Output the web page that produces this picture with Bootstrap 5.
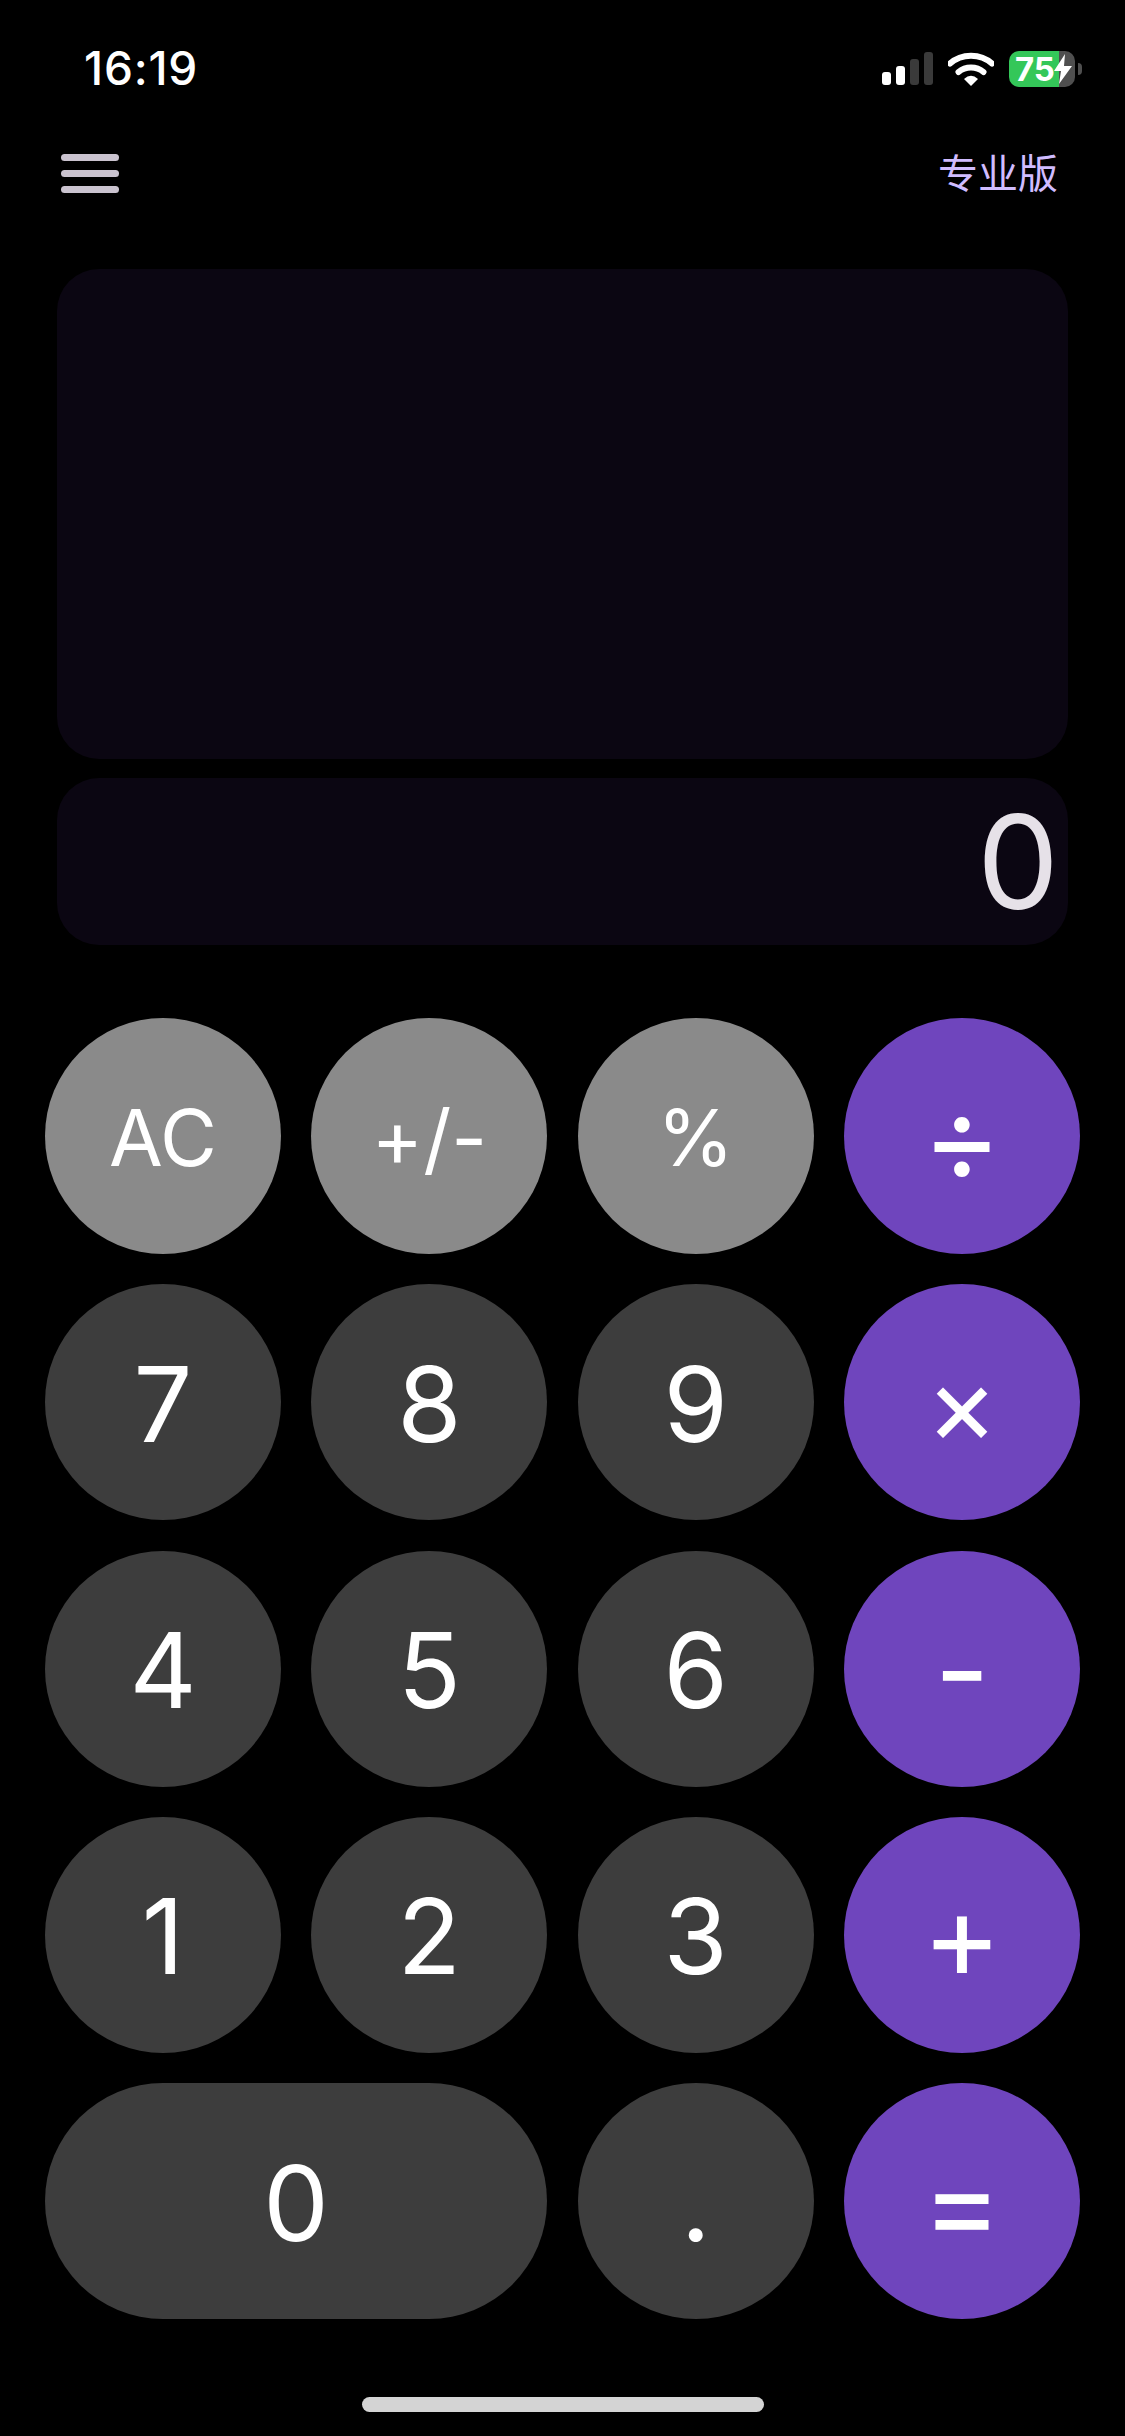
<!DOCTYPE html>
<html lang="zh-CN">

<head>
    <meta charset="UTF-8" />
    <meta name="viewport" content="width=device-width, initial-scale=1.0" />
    <title>计算器</title>
    <link href="https://cdn.jsdelivr.net/npm/bootstrap@5.3.0/dist/css/bootstrap.min.css" rel="stylesheet" />
    <style>
        body {
            background-color: #000;
            color: #fff;
            font-family: Inter, "Noto Sans CJK SC", sans-serif;
            width: 1125px;
            height: 2436px;
            overflow: hidden;
        }

        .status-bar {
            height: 96px;
            padding: 44px 43px 0 84px;
        }

        .clock {
            font-size: 46px;
            font-weight: 500;
            line-height: 48px;
            letter-spacing: 0.8px;
        }

        .status-icons {
            margin-top: 7px;
        }

        .status-icon {
            margin-right: 15px;
        }

        .battery {
            width: 66px;
            height: 36px;
            border-radius: 10px;
            background: linear-gradient(to right, #34c759 50px, #4f4f4f 50px);
            font-size: 33px;
            font-weight: 700;
            line-height: 36px;
            padding-left: 6px;
        }

        .battery svg {
            margin-left: -2px;
        }

        .battery-nub {
            width: 4px;
            height: 12px;
            margin-left: 3px;
            border-radius: 0 4px 4px 0;
            background-color: #4f4f4f;
        }

        .top-bar {
            height: 77px;
            margin-top: 39px;
            padding: 0 67px 0 61px;
        }

        .menu-btn {
            width: 58px;
            gap: 9.5px;
        }

        .menu-btn span {
            height: 6.5px;
            border-radius: 4px;
            background-color: #cac3cf;
        }

        .pro-btn {
            color: #d0bcff;
            font-size: 40px;
            font-weight: 400;
            line-height: 48px;
        }

        .panel {
            margin: 0 57px;
            background-color: #0b0612;
            border-radius: 42px;
        }

        .panel-history {
            height: 490px;
            margin-top: 57px;
        }

        .panel-result {
            height: 167px;
            margin-top: 19px;
            padding-right: 9px;
            color: #e6e1e8;
            font-size: 130px;
            font-weight: 400;
            line-height: 167px;
        }

        .keypad {
            display: grid;
            grid-template-columns: repeat(4, 236px);
            grid-auto-rows: 236px;
            gap: 30.25px 30.33px;
            margin: 73px 45px 0;
        }

        .key {
            --bs-btn-border-width: 0;
            --bs-btn-padding-x: 0;
            --bs-btn-padding-y: 0;
            --bs-btn-color: #fff;
            --bs-btn-hover-color: #fff;
            padding-top: 3px;
            font-size: 104px;
            font-weight: 400;
            line-height: 1;
        }

        .key-fn {
            --bs-btn-bg: #8a8a8a;
            --bs-btn-hover-bg: #8a8a8a;
            font-size: 78px;
        }

        .key-num {
            --bs-btn-bg: #3d3d3d;
            --bs-btn-hover-bg: #3d3d3d;
        }

        .key-op {
            --bs-btn-bg: #6f45bd;
            --bs-btn-hover-bg: #6f45bd;
            font-size: 120px;
        }

        .key-times {
            font-size: 110px;
        }

        .key-wide {
            grid-column: span 2;
        }

        .home-bar {
            width: 402px;
            height: 15px;
            margin: 78px auto 0;
            border-radius: 8px;
            background-color: #d4d4d4;
        }
    </style>
</head>

<body>
    <!-- Status bar -->
    <div class="status-bar d-flex justify-content-between align-items-start">
        <div class="clock">16:19</div>
        <div class="status-icons d-flex align-items-center">
            <svg width="51" height="34" viewBox="0 0 51 34" class="status-icon">
                <rect x="0" y="20" width="9" height="13" rx="3" fill="#fff" />
                <rect x="14" y="14" width="9" height="19" rx="3" fill="#fff" />
                <rect x="28" y="7" width="9" height="26" rx="3" fill="#3a3a3a" />
                <rect x="42" y="0" width="9" height="33" rx="3" fill="#3a3a3a" />
            </svg>
            <svg width="46" height="34" viewBox="0 0 46 34" class="status-icon">
                <path d="M2 11.5C13.500 1 32.500 1 44 11.500" fill="none" stroke="#fff" stroke-width="6" stroke-linecap="round" />
                <path d="M10.500 20C17.500 14 28.500 14 35.500 20" fill="none" stroke="#fff" stroke-width="6" stroke-linecap="round" />
                <path d="M16 27Q23 20.500 30 27L23 34Z" fill="#fff" />
            </svg>
            <div class="battery d-flex align-items-center">75<svg width="20" height="30" viewBox="0 0 20 30"><path d="M12 0 1 17h7l-2 13L19 12h-8Z" fill="#fff" /></svg></div>
            <div class="battery-nub"></div>
        </div>
    </div>

    <!-- Menu and mode switch -->
    <div class="top-bar d-flex justify-content-between align-items-center">
        <div class="menu-btn d-flex flex-column"><span></span><span></span><span></span></div>
        <div class="pro-btn">专业版</div>
    </div>

    <!-- Display -->
    <div class="panel panel-history"></div>
    <div class="panel panel-result text-end">0</div>

    <!-- Keypad -->
    <div class="keypad">
        <button class="btn key key-fn rounded-circle">AC</button>
        <button class="btn key key-fn rounded-circle">+/-</button>
        <button class="btn key key-fn rounded-circle">%</button>
        <button class="btn key key-op rounded-circle">÷</button>
        <button class="btn key key-num rounded-circle">7</button>
        <button class="btn key key-num rounded-circle">8</button>
        <button class="btn key key-num rounded-circle">9</button>
        <button class="btn key key-op key-times rounded-circle">×</button>
        <button class="btn key key-num rounded-circle">4</button>
        <button class="btn key key-num rounded-circle">5</button>
        <button class="btn key key-num rounded-circle">6</button>
        <button class="btn key key-op rounded-circle">-</button>
        <button class="btn key key-num rounded-circle">1</button>
        <button class="btn key key-num rounded-circle">2</button>
        <button class="btn key key-num rounded-circle">3</button>
        <button class="btn key key-op rounded-circle">+</button>
        <button class="btn key key-num key-wide rounded-pill">0</button>
        <button class="btn key key-num rounded-circle">.</button>
        <button class="btn key key-op rounded-circle">=</button>
    </div>

    <div class="home-bar"></div>

    <script src="https://cdn.jsdelivr.net/npm/bootstrap@5.3.0/dist/js/bootstrap.bundle.min.js"></script>
</body>

</html>
